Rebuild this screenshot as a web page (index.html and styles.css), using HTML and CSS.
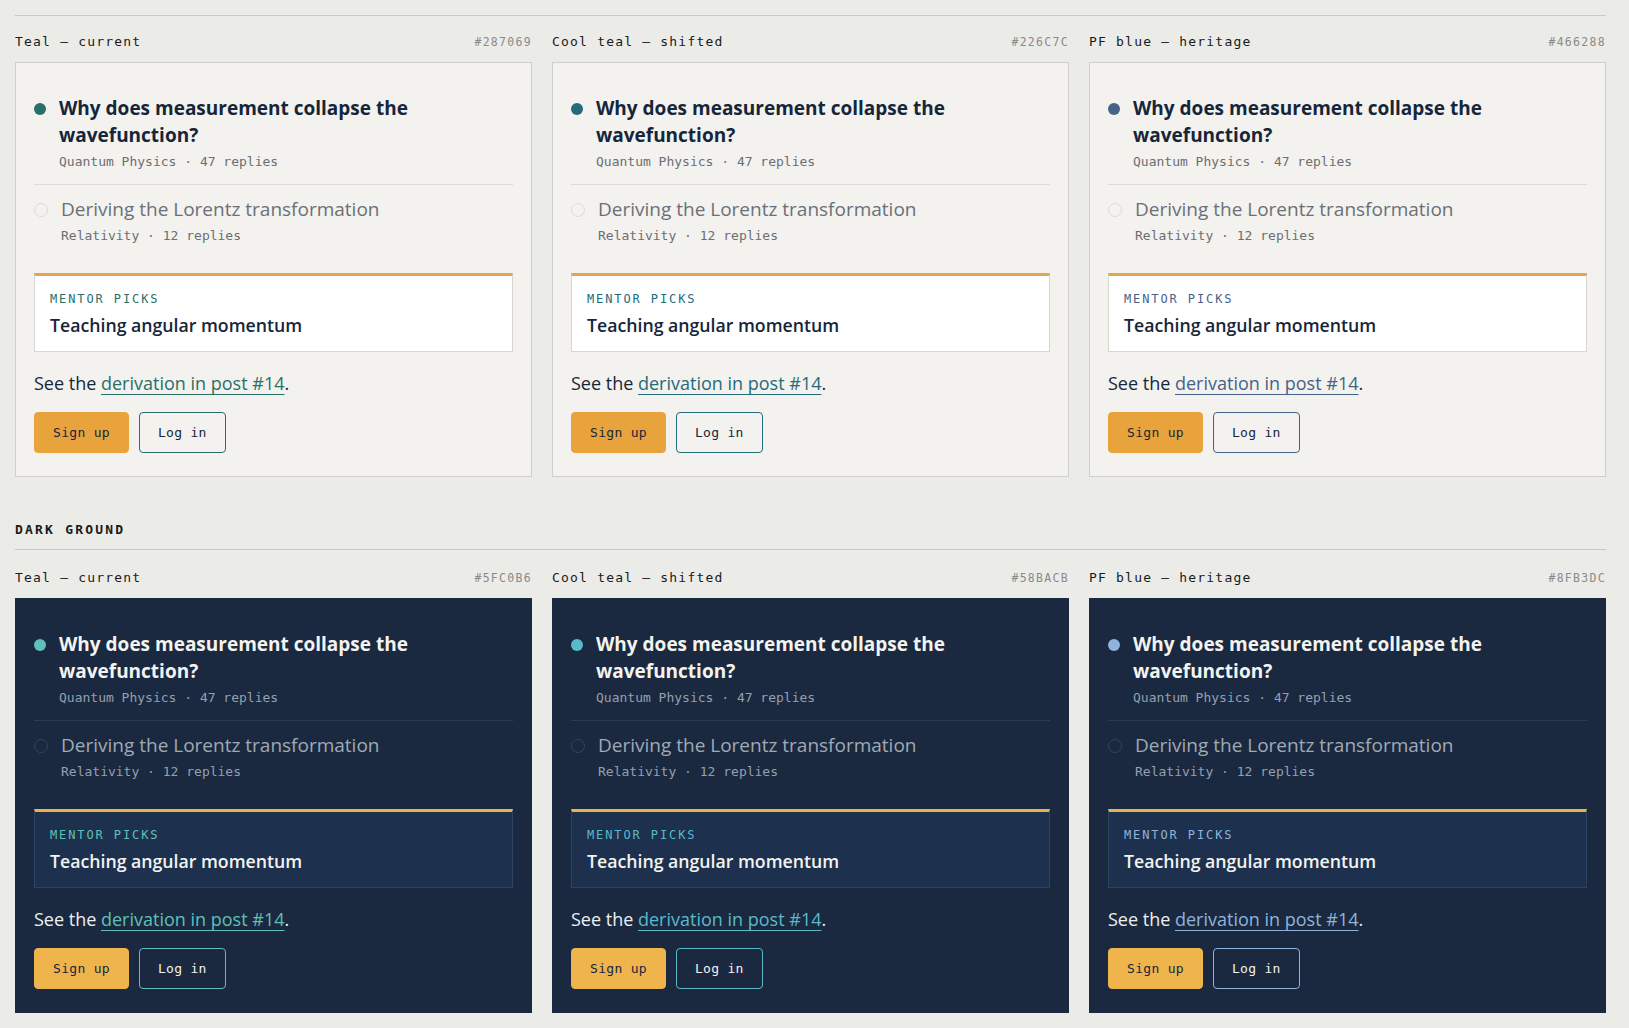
FILE: index.html
```html
<!DOCTYPE html>
<html lang="en">
<head>
  <meta charset="UTF-8">
  <meta name="viewport" content="width=device-width, initial-scale=1.0">
  <title>Accent swatches</title>
  <link rel="stylesheet" href="styles.css">
</head>
<body>
  <section class="ground light">
    <div class="swatches">
      <div class="swatch teal">
        <div class="swatch-head"><span class="swatch-name">Teal — current</span><span class="swatch-hex">#287069</span></div>
        <div class="card">
          <ul class="threads">
            <li class="thread active">
              <span class="dot"></span>
              <div>
                <div class="thread-title">Why does measurement collapse the wavefunction?</div>
                <div class="thread-meta">Quantum Physics · 47 replies</div>
              </div>
            </li>
            <li class="thread">
              <span class="dot"></span>
              <div>
                <div class="thread-title">Deriving the Lorentz transformation</div>
                <div class="thread-meta">Relativity · 12 replies</div>
              </div>
            </li>
          </ul>
          <div class="picks">
            <div class="picks-label">MENTOR PICKS</div>
            <div class="picks-title">Teaching angular momentum</div>
          </div>
          <p class="note">See the <a href="#">derivation in post #14</a>.</p>
          <div class="actions">
            <button class="btn primary">Sign up</button>
            <button class="btn ghost">Log in</button>
          </div>
        </div>
      </div>

      <div class="swatch cool">
        <div class="swatch-head"><span class="swatch-name">Cool teal — shifted</span><span class="swatch-hex">#226C7C</span></div>
        <div class="card">
          <ul class="threads">
            <li class="thread active">
              <span class="dot"></span>
              <div>
                <div class="thread-title">Why does measurement collapse the wavefunction?</div>
                <div class="thread-meta">Quantum Physics · 47 replies</div>
              </div>
            </li>
            <li class="thread">
              <span class="dot"></span>
              <div>
                <div class="thread-title">Deriving the Lorentz transformation</div>
                <div class="thread-meta">Relativity · 12 replies</div>
              </div>
            </li>
          </ul>
          <div class="picks">
            <div class="picks-label">MENTOR PICKS</div>
            <div class="picks-title">Teaching angular momentum</div>
          </div>
          <p class="note">See the <a href="#">derivation in post #14</a>.</p>
          <div class="actions">
            <button class="btn primary">Sign up</button>
            <button class="btn ghost">Log in</button>
          </div>
        </div>
      </div>

      <div class="swatch blue">
        <div class="swatch-head"><span class="swatch-name">PF blue — heritage</span><span class="swatch-hex">#466288</span></div>
        <div class="card">
          <ul class="threads">
            <li class="thread active">
              <span class="dot"></span>
              <div>
                <div class="thread-title">Why does measurement collapse the wavefunction?</div>
                <div class="thread-meta">Quantum Physics · 47 replies</div>
              </div>
            </li>
            <li class="thread">
              <span class="dot"></span>
              <div>
                <div class="thread-title">Deriving the Lorentz transformation</div>
                <div class="thread-meta">Relativity · 12 replies</div>
              </div>
            </li>
          </ul>
          <div class="picks">
            <div class="picks-label">MENTOR PICKS</div>
            <div class="picks-title">Teaching angular momentum</div>
          </div>
          <p class="note">See the <a href="#">derivation in post #14</a>.</p>
          <div class="actions">
            <button class="btn primary">Sign up</button>
            <button class="btn ghost">Log in</button>
          </div>
        </div>
      </div>
    </div>
  </section>

  <h2 class="ground-title">DARK GROUND</h2>
  <section class="ground dark">
    <div class="swatches">
      <div class="swatch teal">
        <div class="swatch-head"><span class="swatch-name">Teal — current</span><span class="swatch-hex">#5FC0B6</span></div>
        <div class="card">
          <ul class="threads">
            <li class="thread active">
              <span class="dot"></span>
              <div>
                <div class="thread-title">Why does measurement collapse the wavefunction?</div>
                <div class="thread-meta">Quantum Physics · 47 replies</div>
              </div>
            </li>
            <li class="thread">
              <span class="dot"></span>
              <div>
                <div class="thread-title">Deriving the Lorentz transformation</div>
                <div class="thread-meta">Relativity · 12 replies</div>
              </div>
            </li>
          </ul>
          <div class="picks">
            <div class="picks-label">MENTOR PICKS</div>
            <div class="picks-title">Teaching angular momentum</div>
          </div>
          <p class="note">See the <a href="#">derivation in post #14</a>.</p>
          <div class="actions">
            <button class="btn primary">Sign up</button>
            <button class="btn ghost">Log in</button>
          </div>
        </div>
      </div>

      <div class="swatch cool">
        <div class="swatch-head"><span class="swatch-name">Cool teal — shifted</span><span class="swatch-hex">#58BACB</span></div>
        <div class="card">
          <ul class="threads">
            <li class="thread active">
              <span class="dot"></span>
              <div>
                <div class="thread-title">Why does measurement collapse the wavefunction?</div>
                <div class="thread-meta">Quantum Physics · 47 replies</div>
              </div>
            </li>
            <li class="thread">
              <span class="dot"></span>
              <div>
                <div class="thread-title">Deriving the Lorentz transformation</div>
                <div class="thread-meta">Relativity · 12 replies</div>
              </div>
            </li>
          </ul>
          <div class="picks">
            <div class="picks-label">MENTOR PICKS</div>
            <div class="picks-title">Teaching angular momentum</div>
          </div>
          <p class="note">See the <a href="#">derivation in post #14</a>.</p>
          <div class="actions">
            <button class="btn primary">Sign up</button>
            <button class="btn ghost">Log in</button>
          </div>
        </div>
      </div>

      <div class="swatch blue">
        <div class="swatch-head"><span class="swatch-name">PF blue — heritage</span><span class="swatch-hex">#8FB3DC</span></div>
        <div class="card">
          <ul class="threads">
            <li class="thread active">
              <span class="dot"></span>
              <div>
                <div class="thread-title">Why does measurement collapse the wavefunction?</div>
                <div class="thread-meta">Quantum Physics · 47 replies</div>
              </div>
            </li>
            <li class="thread">
              <span class="dot"></span>
              <div>
                <div class="thread-title">Deriving the Lorentz transformation</div>
                <div class="thread-meta">Relativity · 12 replies</div>
              </div>
            </li>
          </ul>
          <div class="picks">
            <div class="picks-label">MENTOR PICKS</div>
            <div class="picks-title">Teaching angular momentum</div>
          </div>
          <p class="note">See the <a href="#">derivation in post #14</a>.</p>
          <div class="actions">
            <button class="btn primary">Sign up</button>
            <button class="btn ghost">Log in</button>
          </div>
        </div>
      </div>
    </div>
  </section>
</body>
</html>
```

FILE: styles.css
```css
body {
  margin: 0;
  padding: 15px 23px 20px 15px;
  background-color: #ebebe8;
  font-family: "Open Sans", "Noto Sans", sans-serif;
  color: #16263a;
}

.ground {
  border-top: 1px solid #c9c9c5;
  padding-top: 17px;
}

.ground.dark {
  padding-top: 19px;
}

.ground-title {
  font-family: "DejaVu Sans Mono", monospace;
  font-size: 13px;
  font-weight: bold;
  letter-spacing: 2.2px;
  line-height: 18px;
  color: #1a1a1a;
  margin: 44px 0 10px;
}

.swatches {
  display: grid;
  grid-template-columns: repeat(3, 1fr);
  gap: 20px;
}

.swatch-head {
  display: flex;
  justify-content: space-between;
  align-items: baseline;
  font-family: "DejaVu Sans Mono", monospace;
  line-height: 18px;
  margin-bottom: 11px;
}

.swatch-name {
  font-size: 13px;
  letter-spacing: 1.2px;
  color: #1a1a1a;
}

.swatch-hex {
  font-size: 11.5px;
  letter-spacing: 1.3px;
  color: #8a8a88;
}

/* accents */
.light .teal { --accent: #287069; }
.light .cool { --accent: #226c7c; }
.light .blue { --accent: #466288; }
.dark .teal { --accent: #5fc0b6; }
.dark .cool { --accent: #58bacb; }
.dark .blue { --accent: #8fb3dc; }

.card {
  border: 1px solid #cfcfcb;
  background-color: #f3f2ee;
  padding: 18px 18px 23px;
}

.dark .card {
  background-color: #1a2940;
  border-color: #1a2940;
}

.threads {
  list-style: none;
  margin: 0;
  padding: 0;
}

.thread {
  display: flex;
  align-items: flex-start;
  gap: 13px;
  padding: 11px 0 11px;
}

.thread:first-child {
  padding: 14px 0 13px;
  border-bottom: 1px solid #dcdcd7;
}

.dark .thread:first-child {
  border-bottom-color: #2d3c54;
}

.dot {
  flex: none;
  width: 12px;
  height: 12px;
  border-radius: 50%;
  margin-top: 7.5px;
  background-color: var(--accent);
}

.thread:not(.active) .dot {
  background: none;
  border: 1px solid #dcdcd7;
  margin-top: 6.5px;
}

.dark .thread:not(.active) .dot {
  border-color: #34435b;
}

.thread-title {
  font-size: 19px;
  line-height: 27px;
  color: #6a7078;
}

.active .thread-title {
  font-weight: 700;
  color: #16263a;
}

.dark .thread-title {
  color: #a0a9b4;
}

.dark .active .thread-title {
  color: #f3f3f0;
}

.thread-meta {
  font-family: "DejaVu Sans Mono", monospace;
  font-size: 13px;
  line-height: 18px;
  margin-top: 4px;
  color: #6b6e72;
}

.dark .thread-meta {
  color: #95a0ae;
}

.picks {
  margin-top: 17px;
  background-color: #ffffff;
  border: 1px solid #d6d6d2;
  border-top: 3px solid #e3a64b;
  padding: 15px 15px 14px;
}

.dark .picks {
  background-color: #1d314e;
  border-color: #2c4363;
  border-top-color: #e9b152;
}

.picks-label {
  font-family: "DejaVu Sans Mono", monospace;
  font-size: 12px;
  letter-spacing: 1.9px;
  line-height: 16px;
  color: var(--accent);
}

.picks-title {
  font-size: 17.7px;
  font-weight: 600;
  line-height: 24px;
  margin-top: 6px;
  color: #16263a;
}

.dark .picks-title {
  color: #f3f3f0;
}

.note {
  font-size: 18px;
  line-height: 26px;
  margin: 18px 0 0;
  color: #16263a;
}

.dark .note {
  color: #eef0f0;
}

.note a {
  color: var(--accent);
  text-decoration: underline;
  text-decoration-thickness: 1px;
  text-underline-offset: 4px;
}

.actions {
  display: flex;
  gap: 10px;
  margin-top: 16px;
}

.btn {
  font-family: "DejaVu Sans Mono", monospace;
  font-size: 13px;
  letter-spacing: 0.3px;
  line-height: 19px;
  padding: 10px 18px;
  border-radius: 4px;
  border: 1px solid transparent;
  color: #16263a;
  cursor: pointer;
}

.btn.primary {
  background-color: #e8a33d;
  border-color: #e8a33d;
}

.dark .btn.primary {
  background-color: #f0b44c;
  border-color: #f0b44c;
}

.btn.ghost {
  background: none;
  border-color: var(--accent);
}

.dark .btn.ghost {
  color: #f3f3f0;
}
```
